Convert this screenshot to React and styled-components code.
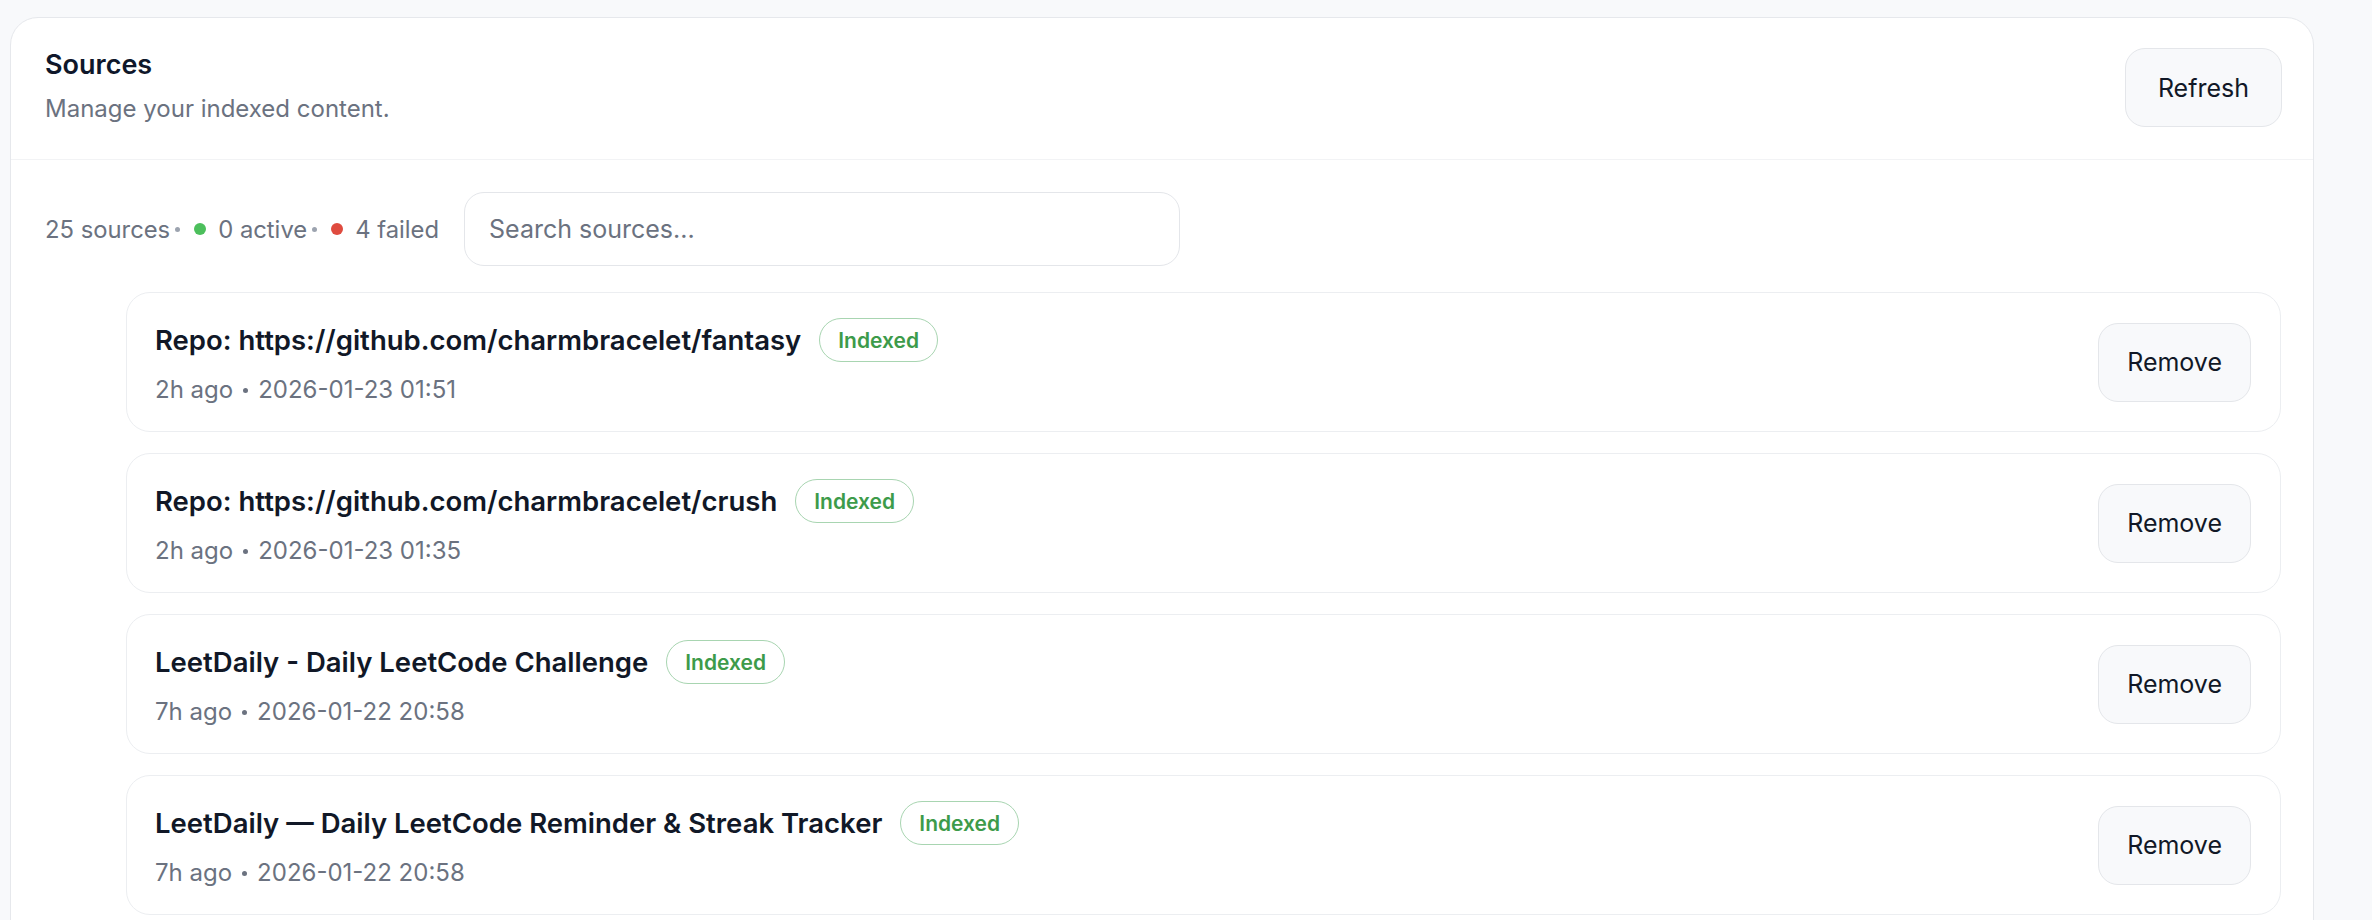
import React from "react";
import styled, { createGlobalStyle } from "styled-components";

const GlobalStyle = createGlobalStyle`
  * { box-sizing: border-box; }
  body {
    margin: 0;
    background: #f8f9fb;
    font-family: Inter, "Noto Sans", "Liberation Sans", sans-serif;
    color: #111827;
  }
`;

const Page = styled.div`
  padding: 17px 10px 0;
`;

const Card = styled.section`
  width: 2304px;
  background: #fff;
  border: 1px solid #e6e8ec;
  border-radius: 28px;
  min-height: 1000px;
`;

const Header = styled.header`
  display: flex;
  justify-content: space-between;
  align-items: flex-start;
  padding: 30px 31px 32px 34px;
  border-bottom: 1px solid #f2f3f5;
`;

const Title = styled.h2`
  margin: 0;
  font-size: 27px;
  line-height: 34px;
  font-weight: 600;
  color: #0f172a;
`;

const Subtitle = styled.p`
  margin: 11px 0 0;
  font-size: 24px;
  line-height: 32px;
  color: #6b7280;
`;

const Button = styled.button`
  height: 79px;
  padding: 0 ${(p) => p.$pad || 32}px;
  border: 1.5px solid #e4e6ea;
  border-radius: 20px;
  background: #f8f9fb;
  color: #111827;
  font-family: inherit;
  font-size: 25px;
  cursor: pointer;
  flex-shrink: 0;
`;

const Body = styled.div`
  padding: 32px 32px 0 34px;
`;

const Toolbar = styled.div`
  display: flex;
  align-items: center;
`;

const Stats = styled.div`
  display: flex;
  align-items: center;
  font-size: 23.8px;
  color: #6b7280;
  margin-right: 25px;
`;

const Sep = styled.span`
  width: 5px;
  height: 5px;
  border-radius: 50%;
  background: #9ca3af;
  margin: 0 14px 0 5px;
`;

const Dot = styled.span`
  width: 12px;
  height: 12px;
  border-radius: 50%;
  background: ${(p) => p.$color};
  margin-right: 12px;
`;

const Search = styled.input`
  width: 716px;
  height: 74px;
  padding: 0 24px;
  border: 1.5px solid #e4e6ea;
  border-radius: 20px;
  font-family: inherit;
  font-size: 25px;
  color: #111827;
  outline: none;
  &::placeholder { color: #6b7280; }
`;

const List = styled.div`
  display: flex;
  flex-direction: column;
  gap: 21px;
  margin: 26px 0 0 81px;
`;

const Row = styled.div`
  display: flex;
  align-items: center;
  justify-content: space-between;
  height: 140px;
  padding: 0 29px 0 28px;
  border: 1.5px solid #eceef1;
  border-radius: 24px;
`;

const TitleLine = styled.div`
  display: flex;
  align-items: center;
  height: 44px;
`;

const RowTitle = styled.span`
  font-size: 27.5px;
  font-weight: 600;
  color: #111827;
`;

const Badge = styled.span`
  display: inline-flex;
  align-items: center;
  height: 44px;
  padding: 0 18px;
  margin-left: 18px;
  border: 1.5px solid #a8d5b1;
  border-radius: 999px;
  color: #3d9b4a;
  font-size: 21px;
  font-weight: 600;
`;

const Meta = styled.div`
  display: flex;
  align-items: center;
  margin-top: 12px;
  font-size: 24px;
  line-height: 32px;
  color: #6b7280;
`;

const MetaDot = styled.span`
  width: 5px;
  height: 5px;
  border-radius: 50%;
  background: #6b7280;
  margin: 0 10px;
`;

const sources = [
  { title: "Repo: https://github.com/charmbracelet/fantasy", ago: "2h ago", at: "2026-01-23 01:51" },
  { title: "Repo: https://github.com/charmbracelet/crush", ago: "2h ago", at: "2026-01-23 01:35" },
  { title: "LeetDaily - Daily LeetCode Challenge", ago: "7h ago", at: "2026-01-22 20:58" },
  { title: "LeetDaily — Daily LeetCode Reminder & Streak Tracker", ago: "7h ago", at: "2026-01-22 20:58" },
];

export default function App() {
  return (
    <Page>
      <GlobalStyle />
      <Card>
        <Header>
          <div>
            <Title>Sources</Title>
            <Subtitle>Manage your indexed content.</Subtitle>
          </div>
          <Button $pad={32}>Refresh</Button>
        </Header>
        <Body>
          <Toolbar>
            <Stats>
              25 sources<Sep />
              <Dot $color="#4cbf5c" />0 active<Sep />
              <Dot $color="#df4b3f" />4 failed
            </Stats>
            <Search placeholder="Search sources..." />
          </Toolbar>
          <List>
            {sources.map((s) => (
              <Row key={s.title}>
                <div>
                  <TitleLine>
                    <RowTitle>{s.title}</RowTitle>
                    <Badge>Indexed</Badge>
                  </TitleLine>
                  <Meta>
                    {s.ago}
                    <MetaDot />
                    {s.at}
                  </Meta>
                </div>
                <Button $pad={28}>Remove</Button>
              </Row>
            ))}
          </List>
        </Body>
      </Card>
    </Page>
  );
}
